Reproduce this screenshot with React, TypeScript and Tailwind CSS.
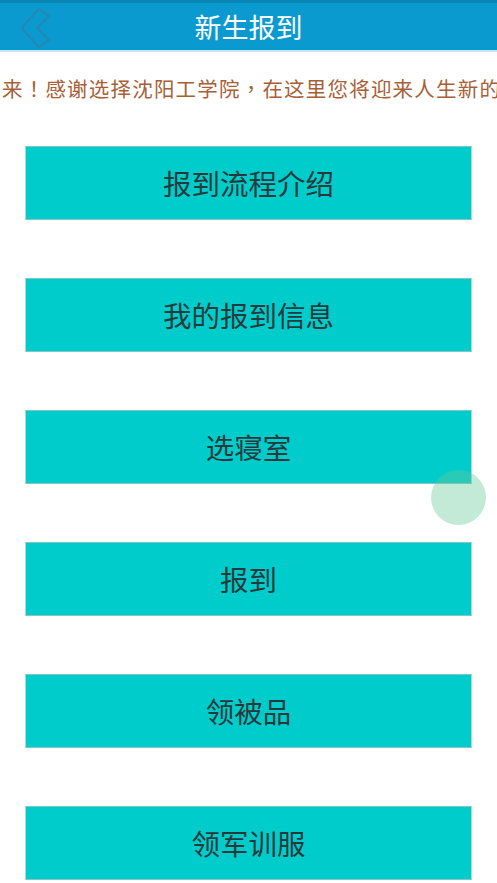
const items = ["报到流程介绍", "我的报到信息", "选寝室", "报到", "领被品", "领军训服"];

const BackIcon = () => (
  <svg width="34" height="44" viewBox="0 0 34 44" fill="none">
    <path
      d="M19 3 L29 10 L17 22 L29 34 L19 41 L4 25 Q1.5 22 4 19 Z"
      stroke="#2488b3"
      strokeWidth="2.2"
      strokeLinejoin="round"
    />
  </svg>
);

const P = ({ c }: { c: string }) => (
  <span style={{ fontFamily: '"Noto Sans CJK TC", sans-serif' }}>{c}</span>
);

export default function App() {
  return (
    <div
      className="relative w-[497px] h-[883px] bg-white overflow-hidden"
      style={{ fontFamily: '"Noto Sans CJK SC", "Noto Sans", sans-serif' }}
    >
      <div className="h-[3px] bg-[#0a86b4]" />
      <div className="relative h-[47px] bg-[#0b9ad0] flex items-center justify-center">
        <div className="absolute left-[20px] top-[3px]">
          <BackIcon />
        </div>
        <span className="text-white text-[27px] leading-none pb-[1px]">新生报到</span>
      </div>
      <div className="h-[2px] bg-[#c4e8f4]" />

      <div className="h-[74px] flex items-center overflow-hidden">
        <p className="whitespace-nowrap pl-[2px] text-[20.5px] tracking-[1.2px] text-[#a85e36] leading-none -mt-[2px]">
          来<P c="！" />感谢选择沈阳工学院<P c="，" />在这里您将迎来人生新的旅程
        </p>
      </div>

      <div className="flex flex-col gap-[58px] pl-[25px] pt-[20px]">
        {items.map((label) => (
          <button
            key={label}
            className="w-[447px] h-[74px] bg-[#00cccc] border-t border-b border-[#86c4c4] border-l border-r border-l-[#a8dada] border-r-[#a8dada] flex items-center justify-center text-[28.5px] text-[#273a3b] leading-none"
          >
            {label}
          </button>
        ))}
      </div>

      <div className="absolute left-[431px] top-[470px] w-[55px] h-[55px] rounded-full bg-[rgba(102,202,152,0.4)]" />
    </div>
  );
}
